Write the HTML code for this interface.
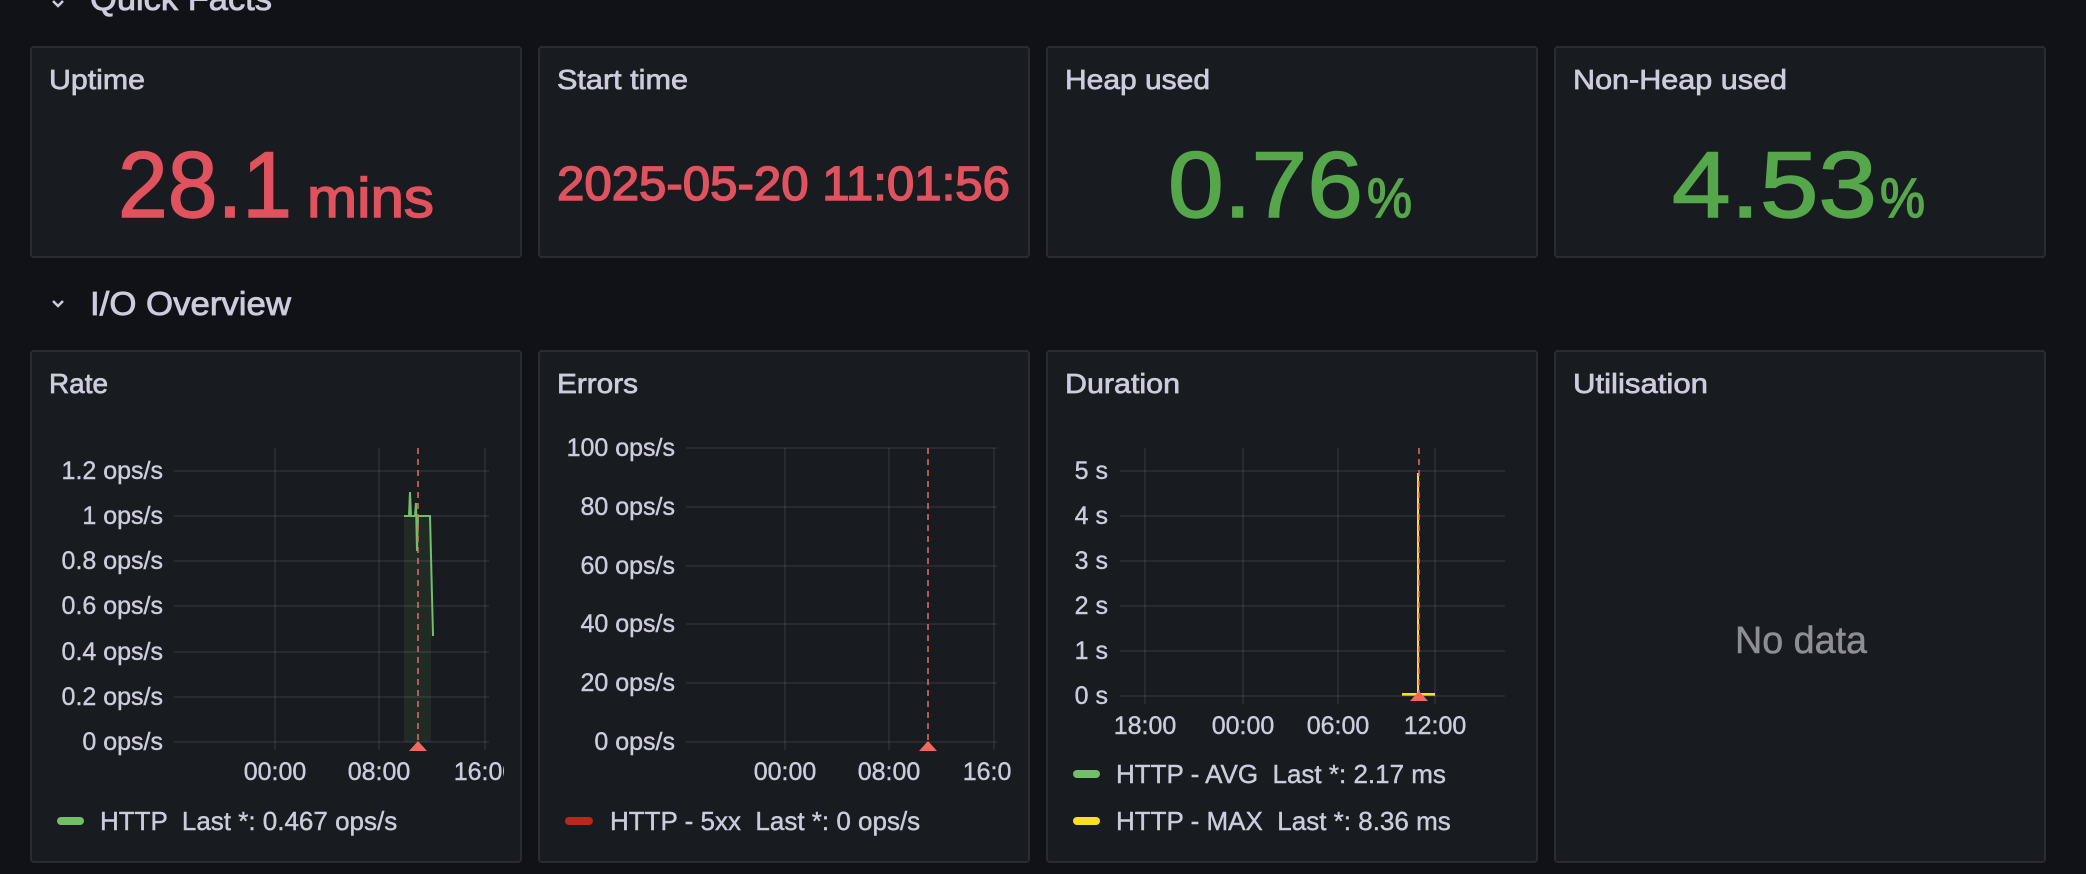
<!DOCTYPE html>
<html><head><meta charset="utf-8"><style>
html,body{margin:0;padding:0;background:#111217;width:2086px;height:874px;overflow:hidden}
svg{display:block;font-family:"Liberation Sans",sans-serif}
</style></head><body>
<svg width="2086" height="874" viewBox="0 0 2086 874" xmlns="http://www.w3.org/2000/svg">
<rect width="2086" height="874" fill="#111217"/>
<!-- Section headings -->
<path d="M53 1 l5 5 l5 -5" stroke="#ccccdc" stroke-width="2.5" fill="none"/>
<text x="90" y="10" font-size="33" fill="#ccccdc" stroke="#ccccdc" stroke-width="0.8" textLength="182" lengthAdjust="spacingAndGlyphs">Quick Facts</text>
<path d="M53 301 l5 5 l5 -5" stroke="#ccccdc" stroke-width="2.5" fill="none"/>
<text x="90" y="315" font-size="33" fill="#ccccdc" stroke="#ccccdc" stroke-width="0.8" textLength="201" lengthAdjust="spacingAndGlyphs">I/O Overview</text>

<g fill="#181b1f" stroke="#2a2c32" stroke-width="2">
<rect x="31" y="47" width="490" height="210" rx="3"/>
<rect x="539" y="47" width="490" height="210" rx="3"/>
<rect x="1047" y="47" width="490" height="210" rx="3"/>
<rect x="1555" y="47" width="490" height="210" rx="3"/>
<rect x="31" y="351" width="490" height="511" rx="3"/>
<rect x="539" y="351" width="490" height="511" rx="3"/>
<rect x="1047" y="351" width="490" height="511" rx="3"/>
<rect x="1555" y="351" width="490" height="511" rx="3"/>
</g>
<g font-size="28" fill="#ccccdc" stroke="#ccccdc" stroke-width="0.7">
<text x="49" y="89" textLength="96" lengthAdjust="spacingAndGlyphs">Uptime</text>
<text x="557" y="89" textLength="131" lengthAdjust="spacingAndGlyphs">Start time</text>
<text x="1065" y="89" textLength="145" lengthAdjust="spacingAndGlyphs">Heap used</text>
<text x="1573" y="89" textLength="214" lengthAdjust="spacingAndGlyphs">Non-Heap used</text>
<text x="49" y="393" textLength="59" lengthAdjust="spacingAndGlyphs">Rate</text>
<text x="557" y="393" textLength="81" lengthAdjust="spacingAndGlyphs">Errors</text>
<text x="1065" y="393" textLength="115" lengthAdjust="spacingAndGlyphs">Duration</text>
<text x="1573" y="393" textLength="135" lengthAdjust="spacingAndGlyphs">Utilisation</text>
</g>
<g stroke-width="1.5">
<text x="118" y="217" font-size="94" fill="#e0525e" stroke="#e0525e" textLength="174" lengthAdjust="spacingAndGlyphs">28.1</text>
<text x="307" y="217" font-size="56" fill="#e0525e" stroke="#e0525e" textLength="127" lengthAdjust="spacingAndGlyphs">mins</text>
<text x="557" y="200" font-size="48" fill="#e0525e" stroke="#e0525e" textLength="453" lengthAdjust="spacingAndGlyphs">2025-05-20 11:01:56</text>
<text x="1168" y="217" font-size="94" fill="#56a64b" stroke="#56a64b" textLength="195" lengthAdjust="spacingAndGlyphs">0.76</text>
<text x="1367" y="217" font-size="56" fill="#56a64b" stroke="#56a64b" textLength="45" lengthAdjust="spacingAndGlyphs">%</text>
<text x="1672" y="217" font-size="94" fill="#56a64b" stroke="#56a64b" textLength="205" lengthAdjust="spacingAndGlyphs">4.53</text>
<text x="1880" y="217" font-size="56" fill="#56a64b" stroke="#56a64b" textLength="45" lengthAdjust="spacingAndGlyphs">%</text>
</g>

<!-- Rate chart -->
<g stroke="#ccccdc" stroke-opacity="0.12" stroke-width="1.5">
<line x1="174" x2="489" y1="471" y2="471"/><line x1="174" x2="489" y1="516" y2="516"/>
<line x1="174" x2="489" y1="561" y2="561"/><line x1="174" x2="489" y1="606" y2="606"/>
<line x1="174" x2="489" y1="652" y2="652"/><line x1="174" x2="489" y1="697" y2="697"/>
<line x1="174" x2="489" y1="742" y2="742"/>
<line x1="275" x2="275" y1="448" y2="750"/><line x1="379" x2="379" y1="448" y2="750"/><line x1="485" x2="485" y1="448" y2="750"/>
</g>
<g font-size="25" fill="#ccccdc" stroke="#ccccdc" stroke-width="0.4" text-anchor="end">
<text x="163" y="479">1.2 ops/s</text><text x="163" y="524">1 ops/s</text>
<text x="163" y="569">0.8 ops/s</text><text x="163" y="614">0.6 ops/s</text>
<text x="163" y="660">0.4 ops/s</text><text x="163" y="705">0.2 ops/s</text>
<text x="163" y="750">0 ops/s</text>
</g>
<g font-size="25" fill="#ccccdc" stroke="#ccccdc" stroke-width="0.4" text-anchor="middle">
<text x="275" y="780">00:00</text><text x="379" y="780">08:00</text>
</g>
<svg x="440" y="750" width="64" height="40"><text x="45" y="30" font-size="25" fill="#ccccdc" stroke="#ccccdc" stroke-width="0.4" text-anchor="middle">16:00</text></svg>
<rect x="404" y="516" width="27" height="226" fill="#73bf69" fill-opacity="0.1"/>
<polyline points="404,516 409,516 410,492 411,516 415,516 416,503 417,551 418,516 430,516 433,636" fill="none" stroke="#73bf69" stroke-width="2"/>
<line x1="418" x2="418" y1="448" y2="742" stroke="#f2695c" stroke-width="1.5" stroke-dasharray="6,5"/>
<path d="M418 741 l-9 10 h18z" fill="#f2695c"/>
<g font-size="26" fill="#ccccdc" stroke="#ccccdc" stroke-width="0.4">
<rect x="57" y="817" width="27" height="8" rx="4" fill="#73bf69" stroke="none"/>
<text x="100" y="830" xml:space="preserve">HTTP  Last *: 0.467 ops/s</text>
</g>

<!-- Errors chart -->
<g stroke="#ccccdc" stroke-opacity="0.12" stroke-width="1.5">
<line x1="686" x2="997" y1="448" y2="448"/><line x1="686" x2="997" y1="507" y2="507"/>
<line x1="686" x2="997" y1="566" y2="566"/><line x1="686" x2="997" y1="624" y2="624"/>
<line x1="686" x2="997" y1="683" y2="683"/><line x1="686" x2="997" y1="742" y2="742"/>
<line x1="785" x2="785" y1="448" y2="750"/><line x1="889" x2="889" y1="448" y2="750"/><line x1="994" x2="994" y1="448" y2="750"/>
</g>
<g font-size="25" fill="#ccccdc" stroke="#ccccdc" stroke-width="0.4" text-anchor="end">
<text x="675" y="456">100 ops/s</text><text x="675" y="515">80 ops/s</text>
<text x="675" y="574">60 ops/s</text><text x="675" y="632">40 ops/s</text>
<text x="675" y="691">20 ops/s</text><text x="675" y="750">0 ops/s</text>
</g>
<g font-size="25" fill="#ccccdc" stroke="#ccccdc" stroke-width="0.4" text-anchor="middle">
<text x="785" y="780">00:00</text><text x="889" y="780">08:00</text>
</g>
<svg x="950" y="750" width="62" height="40"><text x="44" y="30" font-size="25" fill="#ccccdc" stroke="#ccccdc" stroke-width="0.4" text-anchor="middle">16:00</text></svg>
<line x1="928" x2="928" y1="448" y2="742" stroke="#f2695c" stroke-width="1.5" stroke-dasharray="6,5"/>
<path d="M928 741 l-9 10 h18z" fill="#f2695c"/>
<g font-size="26" fill="#ccccdc" stroke="#ccccdc" stroke-width="0.4">
<rect x="565" y="817" width="28" height="8" rx="4" fill="#b8281f" stroke="none"/>
<text x="610" y="830" xml:space="preserve">HTTP - 5xx  Last *: 0 ops/s</text>
</g>

<!-- Duration chart -->
<g stroke="#ccccdc" stroke-opacity="0.12" stroke-width="1.5">
<line x1="1120" x2="1505" y1="471" y2="471"/><line x1="1120" x2="1505" y1="516" y2="516"/>
<line x1="1120" x2="1505" y1="561" y2="561"/><line x1="1120" x2="1505" y1="606" y2="606"/>
<line x1="1120" x2="1505" y1="651" y2="651"/><line x1="1120" x2="1505" y1="696" y2="696"/>
<line x1="1145" x2="1145" y1="448" y2="704"/><line x1="1243" x2="1243" y1="448" y2="704"/>
<line x1="1338" x2="1338" y1="448" y2="704"/><line x1="1435" x2="1435" y1="448" y2="704"/>
</g>
<g font-size="25" fill="#ccccdc" stroke="#ccccdc" stroke-width="0.4" text-anchor="end">
<text x="1108" y="479">5 s</text><text x="1108" y="524">4 s</text>
<text x="1108" y="569">3 s</text><text x="1108" y="614">2 s</text>
<text x="1108" y="659">1 s</text><text x="1108" y="704">0 s</text>
</g>
<g font-size="25" fill="#ccccdc" stroke="#ccccdc" stroke-width="0.4" text-anchor="middle">
<text x="1145" y="734">18:00</text><text x="1243" y="734">00:00</text>
<text x="1338" y="734">06:00</text><text x="1435" y="734">12:00</text>
</g>
<line x1="1402" x2="1435" y1="695" y2="695" stroke="#73bf69" stroke-width="2"/>
<line x1="1402" x2="1435" y1="694" y2="694" stroke="#fade2a" stroke-width="2"/>
<line x1="1418" x2="1418" y1="473" y2="696" stroke="#fade2a" stroke-width="2"/>
<line x1="1419" x2="1419" y1="448" y2="696" stroke="#f2695c" stroke-width="1.5" stroke-dasharray="6,5"/>
<path d="M1419 691 l-9 10 h18z" fill="#f2695c"/>
<g font-size="26" fill="#ccccdc" stroke="#ccccdc" stroke-width="0.4">
<rect x="1073" y="770" width="27" height="8" rx="4" fill="#73bf69" stroke="none"/>
<text x="1116" y="783" xml:space="preserve">HTTP - AVG  Last *: 2.17 ms</text>
<rect x="1073" y="817" width="27" height="8" rx="4" fill="#fade2a" stroke="none"/>
<text x="1116" y="830" xml:space="preserve">HTTP - MAX  Last *: 8.36 ms</text>
</g>

<!-- Utilisation -->
<text x="1735" y="653" font-size="38" fill="#8e8e96" stroke="#8e8e96" stroke-width="0.5" textLength="132" lengthAdjust="spacingAndGlyphs">No data</text>
</svg>
</body></html>
